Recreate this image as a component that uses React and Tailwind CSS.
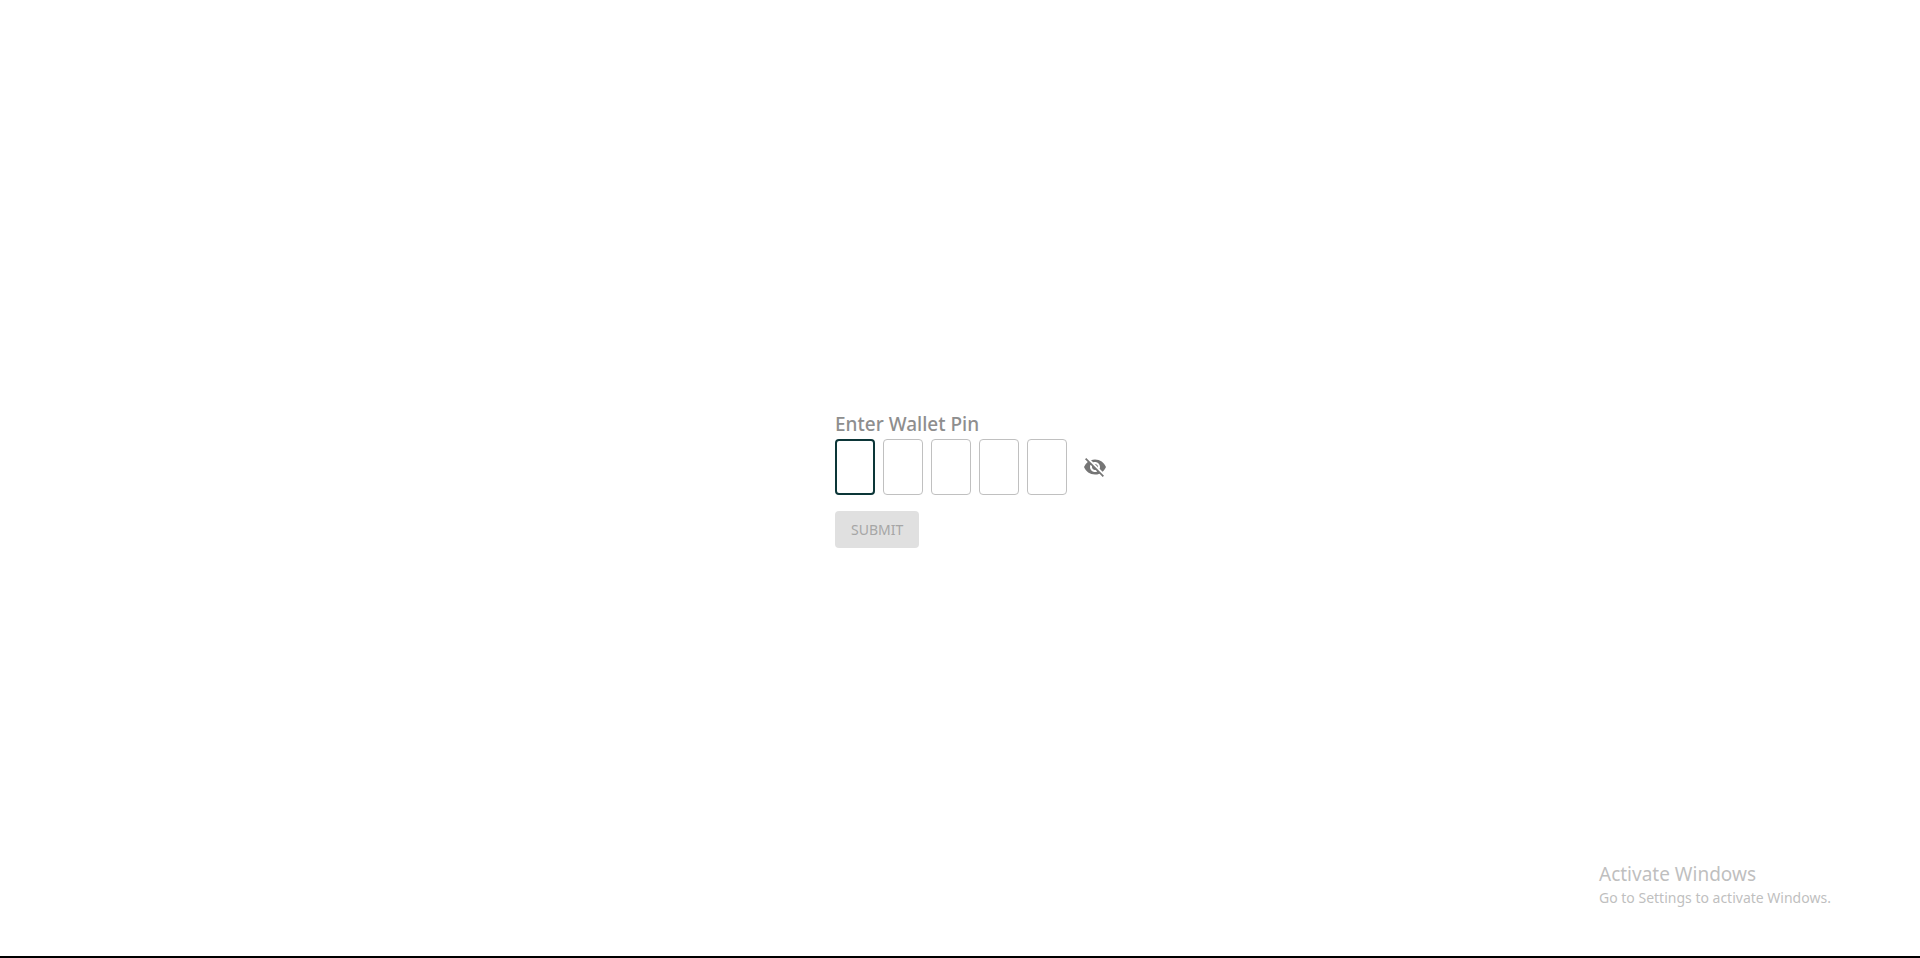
import { useState } from "react";
import { MdVisibility, MdVisibilityOff } from "react-icons/md";

const PIN_LENGTH = 5;

export default function App() {
  const [pin, setPin] = useState(Array(PIN_LENGTH).fill(""));
  const [visible, setVisible] = useState(false);
  const complete = pin.every((digit) => digit !== "");

  const updateDigit = (index, value) =>
    setPin(pin.map((digit, i) => (i === index ? value : digit)));

  return (
    <div className="relative flex min-h-screen flex-col border-b-2 border-black bg-white font-['Noto_Sans',sans-serif]">
      <main className="flex flex-1 items-center justify-center pt-px">
        <form className="w-[250px]" onSubmit={(event) => event.preventDefault()}>
          <fieldset>
            <legend className="text-[19px] leading-[30px] font-medium text-[#8e8e8e]">
              Enter Wallet Pin
            </legend>
            <div className="flex w-max items-center">
              <div className="flex gap-2 pr-2">
                {pin.map((digit, index) => (
                  <input
                    key={index}
                    aria-label={`Digit ${index + 1}`}
                    type={visible ? "text" : "password"}
                    inputMode="numeric"
                    maxLength={1}
                    value={digit}
                    onChange={(event) => updateDigit(index, event.target.value)}
                    className={`h-14 w-10 rounded text-center text-base text-gray-900 outline-none ${
                      index === 0 ? "border-2 border-[#0c3638]" : "border border-[#c0c0c0]"
                    }`}
                  />
                ))}
              </div>
              <button
                type="button"
                aria-label="Toggle pin visibility"
                onClick={() => setVisible(!visible)}
                className="rounded-full p-2 text-[#757575]"
              >
                {visible ? (
                  <MdVisibility className="size-6" />
                ) : (
                  <MdVisibilityOff className="size-6" />
                )}
              </button>
            </div>
          </fieldset>
          <button
            type="submit"
            disabled={!complete}
            className="mt-4 flex h-[37px] items-center rounded bg-[#e0e0e0] px-4 text-sm text-[#a6a6a6]"
          >
            SUBMIT
          </button>
        </form>
      </main>
      <aside className="absolute right-[81px] bottom-12 w-60 text-[#bfbfbf]">
        <p className="text-[19px] leading-7">Activate Windows</p>
        <p className="text-sm leading-5">Go to Settings to activate Windows.</p>
      </aside>
    </div>
  );
}
